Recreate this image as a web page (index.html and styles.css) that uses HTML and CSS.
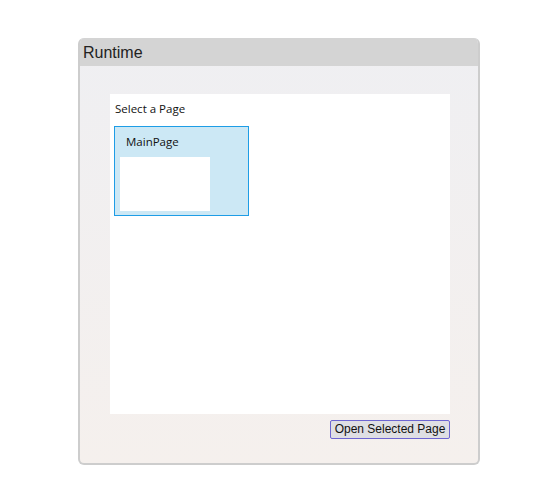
FILE: index.html
```html
<!DOCTYPE html>
<html>
<head>
<meta charset="utf-8">
<link rel="stylesheet" href="styles.css">
</head>
<body>
<div class="panel">
  <div class="header">Runtime</div>
  <div class="body">
    <div class="list">
      <div class="label">Select a Page</div>
      <div class="tile">
        <div class="tile-name">MainPage</div>
        <div class="thumb"></div>
      </div>
    </div>
    <div class="actions">
      <button class="btn">Open Selected Page</button>
    </div>
  </div>
</div>
</body>
</html>
```
FILE: styles.css
```css
html, body {
  margin: 0;
  padding: 0;
  background: #ffffff;
}
.panel {
  margin: 38px 0 0 78px;
  width: 402px;
  height: 427px;
  box-sizing: border-box;
  border: 2px solid #cdcdcd;
  border-top: none;
  border-radius: 6px;
  overflow: hidden;
  display: flex;
  flex-direction: column;
  background: linear-gradient(#efeff2, #f5f0ed);
}
.header {
  height: 28px;
  background: #d4d4d4;
  font-family: "Liberation Sans", Arial, sans-serif;
  font-size: 16px;
  line-height: 29px;
  color: #222;
  padding-left: 3px;
  flex: none;
}
.body {
  padding: 28px 28px 0 30px;
  display: flex;
  flex-direction: column;
}
.list {
  width: 340px;
  height: 320px;
  background: #ffffff;
  box-sizing: border-box;
  padding: 7px 0 0 4px;
}
.label {
  font-family: "Open Sans", "Noto Sans", sans-serif;
  font-size: 11.5px;
  color: #111;
  line-height: 16px;
  padding-left: 1px;
  margin-bottom: 9px;
}
.tile {
  width: 135px;
  height: 90px;
  box-sizing: border-box;
  border: 1px solid #1e9de6;
  background: #cce8f5;
  padding: 7px 0 0 5px;
}
.tile-name {
  font-family: "Open Sans", "Noto Sans", sans-serif;
  font-size: 11.5px;
  color: #111;
  line-height: 16px;
  padding-left: 6px;
  margin-bottom: 7px;
}
.thumb {
  width: 90px;
  height: 54px;
  background: #ffffff;
}
.actions {
  display: flex;
  justify-content: flex-end;
  width: 340px;
  padding-top: 6px;
}
.btn {
  width: 120px;
  height: 19px;
  box-sizing: border-box;
  border: 1px solid #6e66d2;
  border-radius: 2px;
  background: #dfdfe4;
  font-family: "Liberation Sans", Arial, sans-serif;
  font-size: 12px;
  color: #111;
  padding: 0;
  line-height: 17px;
}
```
